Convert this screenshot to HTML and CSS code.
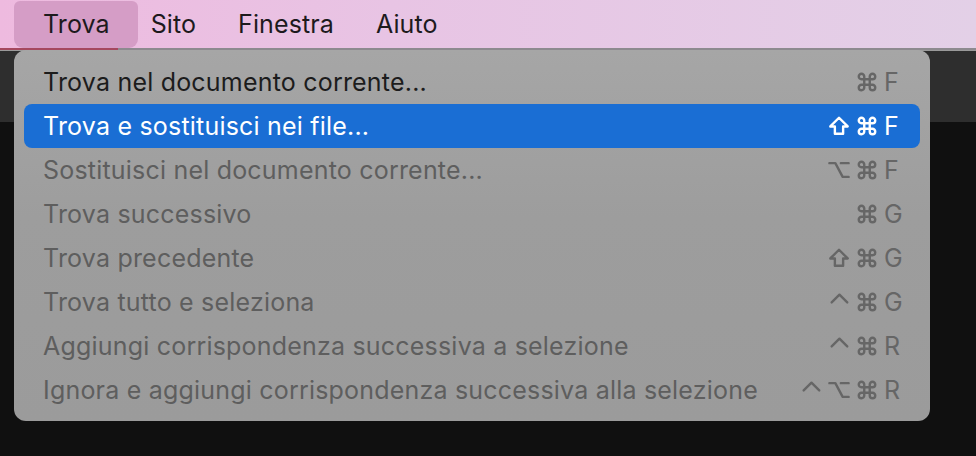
FILE: index.html
```html
<!DOCTYPE html>
<html lang="it">
<head>
<meta charset="utf-8">
<link rel="stylesheet" href="styles.css">
</head>
<body>
<header class="menubar">
  <span class="mb-item active">Trova</span>
  <span class="mb-item">Sito</span>
  <span class="mb-item">Finestra</span>
  <span class="mb-item">Aiuto</span>
</header>
<div class="underline"><span class="underline-accent"></span></div>
<main class="workspace">
  <div class="toolbar"></div>
  <div class="content"></div>
  <div class="menu">
    <div class="row">
      <span class="label">Trova nel documento corrente...</span>
      <span class="keys">
        <svg class="k" viewBox="0 0 24 24"><path d="M15 6v12a3 3 0 1 0 3-3H6a3 3 0 1 0 3 3V6a3 3 0 1 0-3 3h12a3 3 0 1 0-3-3"/></svg>
        <span class="l">F</span>
      </span>
    </div>
    <div class="row selected">
      <span class="label">Trova e sostituisci nei file...</span>
      <span class="keys">
        <svg class="k" viewBox="0 0 24 24"><path d="M12 3L21.5 12.5H16.5V20.5H7.5V12.5H2.5Z"/></svg>
        <svg class="k" viewBox="0 0 24 24"><path d="M15 6v12a3 3 0 1 0 3-3H6a3 3 0 1 0 3 3V6a3 3 0 1 0-3 3h12a3 3 0 1 0-3-3"/></svg>
        <span class="l">F</span>
      </span>
    </div>
    <div class="row disabled">
      <span class="label">Sostituisci nel documento corrente...</span>
      <span class="keys">
        <svg class="k" viewBox="0 0 24 24"><path d="M1.5 4.5H8L16 19.5H22.5M14 4.5H22.5"/></svg>
        <svg class="k" viewBox="0 0 24 24"><path d="M15 6v12a3 3 0 1 0 3-3H6a3 3 0 1 0 3 3V6a3 3 0 1 0-3 3h12a3 3 0 1 0-3-3"/></svg>
        <span class="l">F</span>
      </span>
    </div>
    <div class="row disabled">
      <span class="label">Trova successivo</span>
      <span class="keys">
        <svg class="k" viewBox="0 0 24 24"><path d="M15 6v12a3 3 0 1 0 3-3H6a3 3 0 1 0 3 3V6a3 3 0 1 0-3 3h12a3 3 0 1 0-3-3"/></svg>
        <span class="l">G</span>
      </span>
    </div>
    <div class="row disabled">
      <span class="label">Trova precedente</span>
      <span class="keys">
        <svg class="k" viewBox="0 0 24 24"><path d="M12 3L21.5 12.5H16.5V20.5H7.5V12.5H2.5Z"/></svg>
        <svg class="k" viewBox="0 0 24 24"><path d="M15 6v12a3 3 0 1 0 3-3H6a3 3 0 1 0 3 3V6a3 3 0 1 0-3 3h12a3 3 0 1 0-3-3"/></svg>
        <span class="l">G</span>
      </span>
    </div>
    <div class="row disabled">
      <span class="label">Trova tutto e seleziona</span>
      <span class="keys">
        <svg class="k" viewBox="0 0 24 24"><path d="M4 12.5L12.5 4L21 12.5"/></svg>
        <svg class="k" viewBox="0 0 24 24"><path d="M15 6v12a3 3 0 1 0 3-3H6a3 3 0 1 0 3 3V6a3 3 0 1 0-3 3h12a3 3 0 1 0-3-3"/></svg>
        <span class="l">G</span>
      </span>
    </div>
    <div class="row disabled">
      <span class="label">Aggiungi corrispondenza successiva a selezione</span>
      <span class="keys">
        <svg class="k" viewBox="0 0 24 24"><path d="M4 12.5L12.5 4L21 12.5"/></svg>
        <svg class="k" viewBox="0 0 24 24"><path d="M15 6v12a3 3 0 1 0 3-3H6a3 3 0 1 0 3 3V6a3 3 0 1 0-3 3h12a3 3 0 1 0-3-3"/></svg>
        <span class="l">R</span>
      </span>
    </div>
    <div class="row disabled">
      <span class="label">Ignora e aggiungi corrispondenza successiva alla selezione</span>
      <span class="keys">
        <svg class="k" viewBox="0 0 24 24"><path d="M4 12.5L12.5 4L21 12.5"/></svg>
        <svg class="k" viewBox="0 0 24 24"><path d="M1.5 4.5H8L16 19.5H22.5M14 4.5H22.5"/></svg>
        <svg class="k" viewBox="0 0 24 24"><path d="M15 6v12a3 3 0 1 0 3-3H6a3 3 0 1 0 3 3V6a3 3 0 1 0-3 3h12a3 3 0 1 0-3-3"/></svg>
        <span class="l">R</span>
      </span>
    </div>
  </div>
</main>
</body>
</html>
```
FILE: styles.css
```css
* { box-sizing: border-box; }
html, body { margin: 0; padding: 0; }
body {
  width: 976px;
  height: 456px;
  overflow: hidden;
  background: #101010;
  font-family: "Inter", "Liberation Sans", sans-serif;
}
.menubar {
  height: 48px;
  display: flex;
  align-items: center;
  padding-left: 14px;
  background: linear-gradient(90deg, #eebadf 0%, #e8c4e4 40%, #e3d0e7 100%);
}
.mb-item {
  height: 47px;
  display: flex;
  align-items: center;
  padding: 0 21px;
  font-size: 25px;
  color: #1d1a1d;
  letter-spacing: 0.1px;
}
.mb-item.active {
  background: #d59dc6;
  border-radius: 6px 6px 9px 9px;
  padding: 0 28px 0 29px;
  margin-right: -8px;
}
.underline {
  height: 2px;
  background: #8d8a8f;
}
.underline-accent {
  display: block;
  width: 118px;
  height: 2px;
  background: #a5485f;
}
.workspace {
  position: relative;
  height: 406px;
}
.toolbar {
  height: 72px;
  background: #2e2e2e;
  border-top: 1px solid #9a9a9a;
}
.content {
  height: 334px;
  background: #101010;
}
.menu {
  position: absolute;
  left: 14px;
  top: 0;
  width: 916px;
  height: 371px;
  padding: 10px 10px 9px;
  border-radius: 12px;
  background: linear-gradient(180deg, #a6a6a6 0%, #9d9d9d 45%, #9b9b9b 100%);
  display: flex;
  flex-direction: column;
}
.row {
  height: 44px;
  flex: none;
  display: flex;
  align-items: center;
  justify-content: space-between;
  padding: 0 18px 0 19px;
  border-radius: 8px;
  font-size: 25px;
  letter-spacing: 0.2px;
  color: #1c1c1c;
}
.row.selected {
  background: #1a6ed4;
  color: #ffffff;
}
.row.disabled { color: #5e5e5e; }
.keys {
  display: flex;
  align-items: center;
  gap: 6px;
  color: #666666;
}
.row.selected .keys { color: #ffffff; }
.k {
  width: 22px;
  height: 22px;
  fill: none;
  stroke: currentColor;
  stroke-width: 2.6;
  stroke-linecap: round;
  stroke-linejoin: round;
}
.l {
  width: 18px;
  text-align: left;
  letter-spacing: 0;
}
```
